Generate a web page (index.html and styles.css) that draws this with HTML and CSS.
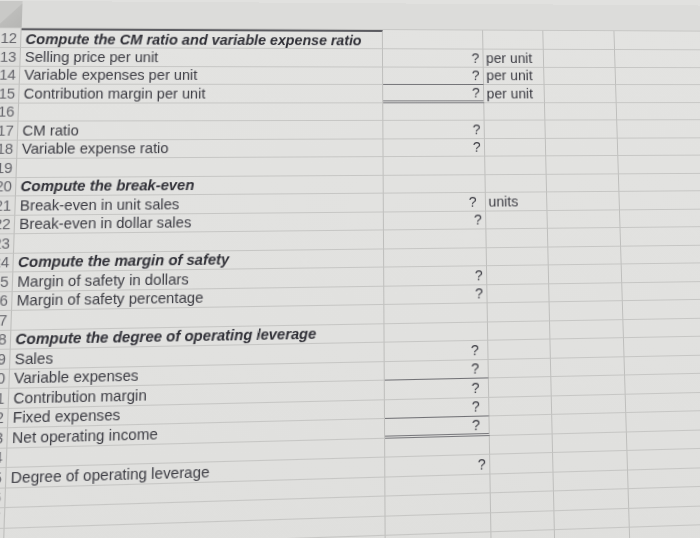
FILE: index.html
```html
<!DOCTYPE html>
<html>
<head>
<meta charset="utf-8">
<title>Sheet</title>
<link rel="stylesheet" href="styles.css">
</head>
<body>
<div class="sheet">
  <div class="row hdr"><div class="c n corner"></div><div class="c a"></div><div class="c b"></div><div class="c x"></div><div class="c d"></div><div class="c e"></div></div>
  <div class="row r12"><div class="c n">12</div><div class="c a top h">Compute the CM ratio and variable expense ratio</div><div class="c b"></div><div class="c x"></div><div class="c d"></div><div class="c e"></div></div>
  <div class="row"><div class="c n">13</div><div class="c a">Selling price per unit</div><div class="c b">?</div><div class="c x">per unit</div><div class="c d"></div><div class="c e"></div></div>
  <div class="row"><div class="c n">14</div><div class="c a">Variable expenses per unit</div><div class="c b u1">?</div><div class="c x">per unit</div><div class="c d"></div><div class="c e"></div></div>
  <div class="row"><div class="c n">15</div><div class="c a">Contribution margin per unit</div><div class="c b u2">?</div><div class="c x">per unit</div><div class="c d"></div><div class="c e"></div></div>
  <div class="row"><div class="c n">16</div><div class="c a"></div><div class="c b"></div><div class="c x"></div><div class="c d"></div><div class="c e"></div></div>
  <div class="row"><div class="c n">17</div><div class="c a">CM ratio</div><div class="c b">?</div><div class="c x"></div><div class="c d"></div><div class="c e"></div></div>
  <div class="row"><div class="c n">18</div><div class="c a">Variable expense ratio</div><div class="c b">?</div><div class="c x"></div><div class="c d"></div><div class="c e"></div></div>
  <div class="row"><div class="c n">19</div><div class="c a"></div><div class="c b"></div><div class="c x"></div><div class="c d"></div><div class="c e"></div></div>
  <div class="row"><div class="c n">20</div><div class="c a h">Compute the break-even</div><div class="c b"></div><div class="c x"></div><div class="c d"></div><div class="c e"></div></div>
  <div class="row"><div class="c n">21</div><div class="c a">Break-even in unit sales</div><div class="c b wide">?</div><div class="c x">units</div><div class="c d"></div><div class="c e"></div></div>
  <div class="row"><div class="c n">22</div><div class="c a">Break-even in dollar sales</div><div class="c b">?</div><div class="c x"></div><div class="c d"></div><div class="c e"></div></div>
  <div class="row"><div class="c n">23</div><div class="c a"></div><div class="c b"></div><div class="c x"></div><div class="c d"></div><div class="c e"></div></div>
  <div class="row"><div class="c n">24</div><div class="c a h">Compute the margin of safety</div><div class="c b"></div><div class="c x"></div><div class="c d"></div><div class="c e"></div></div>
  <div class="row"><div class="c n">25</div><div class="c a">Margin of safety in dollars</div><div class="c b">?</div><div class="c x"></div><div class="c d"></div><div class="c e"></div></div>
  <div class="row"><div class="c n">26</div><div class="c a">Margin of safety percentage</div><div class="c b">?</div><div class="c x"></div><div class="c d"></div><div class="c e"></div></div>
  <div class="row"><div class="c n">27</div><div class="c a"></div><div class="c b"></div><div class="c x"></div><div class="c d"></div><div class="c e"></div></div>
  <div class="row"><div class="c n">28</div><div class="c a h">Compute the degree of operating leverage</div><div class="c b"></div><div class="c x"></div><div class="c d"></div><div class="c e"></div></div>
  <div class="row"><div class="c n">29</div><div class="c a">Sales</div><div class="c b wide">?</div><div class="c x"></div><div class="c d"></div><div class="c e"></div></div>
  <div class="row"><div class="c n">30</div><div class="c a">Variable expenses</div><div class="c b wide u1">?</div><div class="c x"></div><div class="c d"></div><div class="c e"></div></div>
  <div class="row"><div class="c n">31</div><div class="c a">Contribution margin</div><div class="c b wide">?</div><div class="c x"></div><div class="c d"></div><div class="c e"></div></div>
  <div class="row"><div class="c n">32</div><div class="c a">Fixed expenses</div><div class="c b wide u1">?</div><div class="c x"></div><div class="c d"></div><div class="c e"></div></div>
  <div class="row"><div class="c n">33</div><div class="c a">Net operating income</div><div class="c b wide u2">?</div><div class="c x"></div><div class="c d"></div><div class="c e"></div></div>
  <div class="row"><div class="c n">34</div><div class="c a"></div><div class="c b"></div><div class="c x"></div><div class="c d"></div><div class="c e"></div></div>
  <div class="row"><div class="c n">35</div><div class="c a">Degree of operating leverage</div><div class="c b">?</div><div class="c x"></div><div class="c d"></div><div class="c e"></div></div>
  <div class="row"><div class="c n">36</div><div class="c a"></div><div class="c b"></div><div class="c x"></div><div class="c d"></div><div class="c e"></div></div>
  <div class="row"><div class="c n">37</div><div class="c a"></div><div class="c b"></div><div class="c x"></div><div class="c d"></div><div class="c e"></div></div>
  <div class="row"><div class="c n">38</div><div class="c a"></div><div class="c b"></div><div class="c x"></div><div class="c d"></div><div class="c e"></div></div>
  <div class="row"><div class="c n">39</div><div class="c a"></div><div class="c b"></div><div class="c x"></div><div class="c d"></div><div class="c e"></div></div>
  <div class="row"><div class="c n">40</div><div class="c a"></div><div class="c b"></div><div class="c x"></div><div class="c d"></div><div class="c e"></div></div>
</div>
</body>
</html>
```

FILE: styles.css
```css
html, body {
  margin: 0;
  padding: 0;
  width: 700px;
  height: 538px;
  overflow: hidden;
  background: #e1e1df;
}

.sheet {
  width: 760px;
  font-family: "Liberation Sans", Arial, sans-serif;
  font-size: 14.2px;
  color: #3c3c43;
  background: linear-gradient(180deg, #e3e3e1 0%, #e1e1df 60%, #dfdfdd 100%);
  transform-origin: 0 0;
  transform: matrix3d(1.045378, 0.0071967, 0, 0.00007671, -0.035776, 0.977955, 0, -0.00010766, 0, 0, 1, 0, -0.35411, 0.73346, 0, 1);
}

.row {
  display: grid;
  grid-template-columns: 22px 355.1px 101.5px 62.7px 73.7px 145px;
  height: 18.5px;
}

.c {
  box-sizing: border-box;
  display: flex;
  align-items: center;
  padding: 0 3px;
  border-right: 1px solid #bebebc;
  border-bottom: 1px solid #c6c6c4;
  white-space: nowrap;
  overflow: hidden;
}

.a {
  padding-left: 4px;
}

.n {
  justify-content: flex-end;
  padding: 0 3px 0 0;
  color: #64646a;
  background: #dededc;
}

.b {
  justify-content: flex-end;
  padding-right: 3px;
}

.b.wide {
  padding-right: 8px;
}

.x {
  padding-left: 3px;
}

.h {
  font-weight: bold;
  font-style: italic;
  color: #303037;
}

.hdr {
  height: 28px;
}

.hdr .c {
  border-right: none;
  background: #dcdcda;
}

.hdr .corner {
  background: linear-gradient(135deg, #c9c9c7 0%, #c9c9c7 50%, #bdbdbb 50%, #b6b6b4 100%);
}

.r12 {
  height: 20px;
}

.top {
  border-top: 2px solid #5b5b60;
}

.u1 {
  border-bottom: 1px solid #707074;
}

.u2 {
  border-bottom: 3px double #78787c;
}
```
